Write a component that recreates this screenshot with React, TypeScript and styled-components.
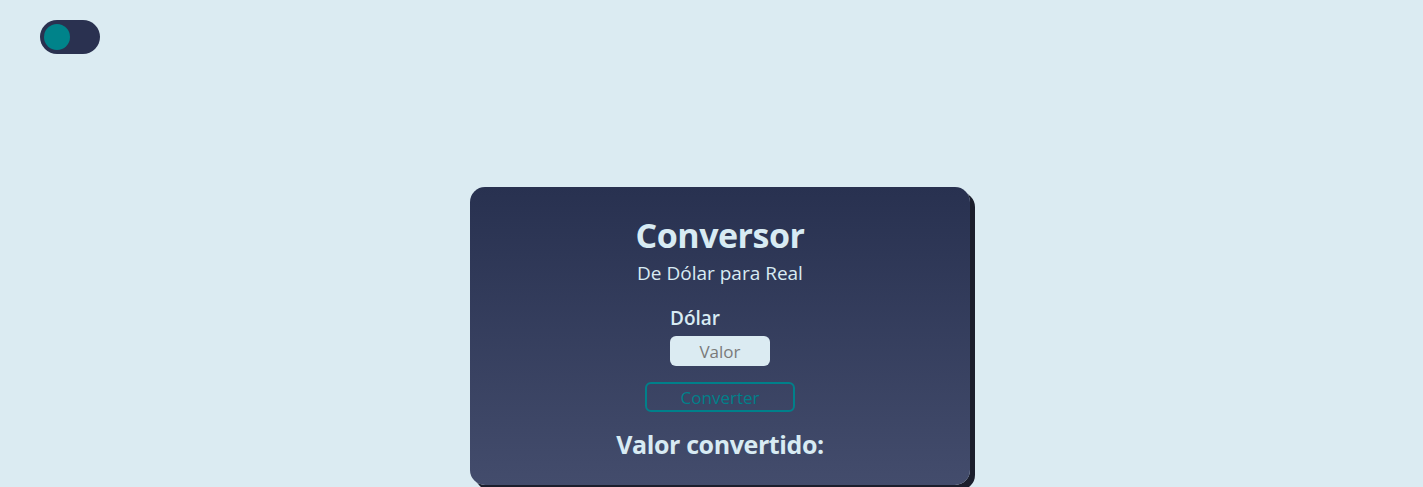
import React from "react";
import styled, { createGlobalStyle } from "styled-components";

const Global = createGlobalStyle`
  html, body { margin: 0; padding: 0; }
  body {
    background: #dbebf2;
    font-family: "Open Sans", "Noto Sans", sans-serif;
    height: 487px;
    overflow: hidden;
  }
`;

const Page = styled.div`
  display: flex;
  flex-direction: column;
  padding: 20px 40px 0;
`;

const Toggle = styled.div`
  width: 60px;
  height: 34px;
  border-radius: 17px;
  background: #2a3150;
  display: flex;
  align-items: center;
  padding: 0 4px;
  box-sizing: border-box;
`;

const Knob = styled.div`
  width: 26px;
  height: 26px;
  border-radius: 50%;
  background: #00838a;
`;

const Center = styled.div`
  display: flex;
  justify-content: center;
  margin-top: 133px;
  padding-left: 17px;
`;

const Card = styled.div`
  width: 500px;
  height: 298px;
  box-sizing: border-box;
  border-radius: 15px;
  background: linear-gradient(180deg, #283150 0%, #434c6c 100%);
  box-shadow: 5px 5px 0 #1b1e2c;
  display: flex;
  flex-direction: column;
  align-items: center;
  padding-top: 27px;
  color: #d8ebf3;
`;

const Title = styled.h1`
  margin: 0;
  font-size: 34px;
  font-weight: 700;
  line-height: 42px;
  letter-spacing: -0.5px;
`;

const Subtitle = styled.p`
  margin: 0;
  margin-top: 5px;
  font-size: 19px;
  font-weight: 400;
  line-height: 25px;
`;

const Field = styled.div`
  display: flex;
  flex-direction: column;
  align-items: flex-start;
  margin-top: 20px;
`;

const Label = styled.label`
  font-size: 19px;
  font-weight: 600;
  line-height: 24px;
`;

const Input = styled.input`
  margin-top: 6px;
  width: 100px;
  height: 30px;
  box-sizing: border-box;
  border: none;
  border-radius: 6px;
  background: #dbebf2;
  text-align: center;
  font-family: inherit;
  font-size: 17px;
  outline: none;
  padding: 0;
  &::placeholder { color: #7a7a7a; }
`;

const Button = styled.button`
  margin-top: 16px;
  width: 150px;
  height: 30px;
  box-sizing: border-box;
  border: 2px solid #00808a;
  border-radius: 6px;
  background: transparent;
  color: #00808a;
  font-family: inherit;
  font-size: 17px;
  padding: 0;
`;

const Result = styled.h2`
  margin: 0;
  margin-top: 16px;
  font-size: 25px;
  font-weight: 700;
  line-height: 32px;
  letter-spacing: -0.4px;
`;

export default function App() {
  return (
    <>
      <Global />
      <Page>
        <Toggle>
          <Knob />
        </Toggle>
        <Center>
          <Card>
            <Title>Conversor</Title>
            <Subtitle>De Dólar para Real</Subtitle>
            <Field>
              <Label>Dólar</Label>
              <Input placeholder="Valor" />
            </Field>
            <Button>Converter</Button>
            <Result>Valor convertido:</Result>
          </Card>
        </Center>
      </Page>
    </>
  );
}
